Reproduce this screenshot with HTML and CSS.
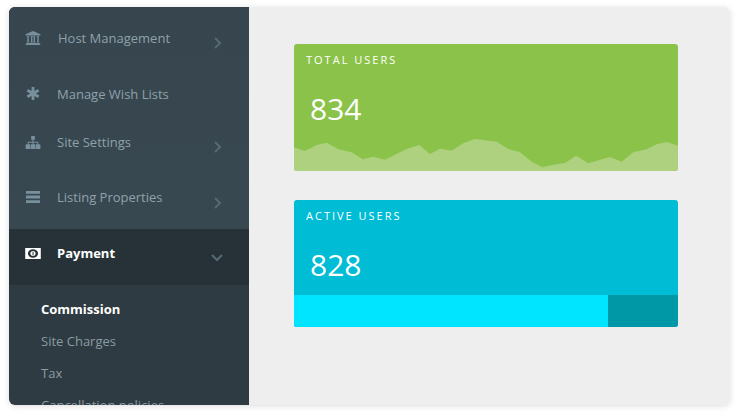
FILE: index.html
```html
<!DOCTYPE html>
<html lang="en">
<head>
<meta charset="utf-8">
<title>Dashboard</title>
<link rel="stylesheet" href="styles.css">
</head>
<body>
<div class="window">
  <nav class="sidebar">
    <ul class="menu">
      <li class="item item-host">
        <svg class="icon" viewBox="0 0 17 16"><path d="M8.500 0 17 3.600V5H0V3.600zM1.500 6h2.600v.8H3.600v5.400h.5v1H1.500v-1H2V6.800h-.5zM5.700 6h2.600v.8h-.5v5.400h.5v1H5.700v-1h.5V6.800h-.5zM8.700 6h2.600v.8h-.5v5.400h.5v1H8.700v-1h.5V6.800h-.5zM12.900 6h2.600v.8H15v5.400h.5v1h-2.600v-1h.5V6.800h-.5zM.8 13.800h15.400V15H.8zM0 15.200h17V16H0z"/></svg>
        <span class="label">Host Management</span>
        <svg class="chev" viewBox="0 0 10 14"><path d="M2 2l5 5-5 5"/></svg>
      </li>
      <li class="item item-wish">
        <svg class="icon icon-small" viewBox="0 0 14 14"><path d="M5.500 0h3v4.400l3.800-2.200 1.500 2.600L10 7l3.800 2.200-1.500 2.600L8.500 9.600V14h-3V9.600l-3.800 2.200L.2 9.200 4 7 .2 4.800l1.500-2.600 3.800 2.200z"/></svg>
        <span class="label">Manage Wish Lists</span>
      </li>
      <li class="item item-site">
        <svg class="icon icon-site" viewBox="0 0 16 14"><path d="M6 0h4v4H8.600v2.200h5.100V9H15a1 1 0 0 1 1 1v4h-5v-4a1 1 0 0 1 1-1h.7V7.200H8.600V9h1.900v5h-5V9h2V7.200H3.300V9H4a1 1 0 0 1 1 1v4H0v-4a1 1 0 0 1 1-1h1.300V6.200h5.100V4H6z"/></svg>
        <span class="label">Site Settings</span>
        <svg class="chev" viewBox="0 0 10 14"><path d="M2 2l5 5-5 5"/></svg>
      </li>
      <li class="item item-list">
        <svg class="icon icon-bars" viewBox="0 0 14 12"><path d="M0 0h14v2.800H0zM0 4.600h14v2.800H0zM0 9.200h14V12H0z"/></svg>
        <span class="label">Listing Properties</span>
        <svg class="chev" viewBox="0 0 10 14"><path d="M2 2l5 5-5 5"/></svg>
      </li>
      <li class="item item-pay">
        <svg class="icon icon-pay" viewBox="0 0 17 12"><path d="M0 0h17v12H0z"/><ellipse class="pay-hole" cx="8.500" cy="6" rx="5.500" ry="4.600"/><circle class="pay-mark" cx="8.500" cy="6" r="2.800"/><path class="pay-digit" d="M8 4.200h1.100v3.600H8z"/></svg>
        <span class="label">Payment</span>
        <svg class="chev chev-open" viewBox="0 0 14 10"><path d="M2 2l5 5 5-5"/></svg>
      </li>
    </ul>
    <ul class="submenu">
      <li class="sub sub-active">Commission</li>
      <li class="sub">Site Charges</li>
      <li class="sub">Tax</li>
      <li class="sub">Cancellation policies</li>
    </ul>
  </nav>
  <main class="content">
    <section class="card card-green">
      <h2 class="card-title">TOTAL USERS</h2>
      <p class="card-value">834</p>
      <svg class="spark" viewBox="0 0 384 45" preserveAspectRatio="none"><path d="M0 21.300 11 25 22.700 19 32.700 16.700 44.300 23.300 57.700 26.300 68.700 33.300 79.300 30.700 91 33.700 112.700 23 125.300 19 136 28 146 22.700 157.700 24.700 169.300 17.300 181 13 191 14.300 202.700 15.700 214.300 23 226 26.300 237.700 35.700 248.300 41.300 259.300 38.700 271 37 282 29.700 294.300 37.300 316 31 327.700 35.700 339.300 26.300 352.700 23.300 362.700 18.300 372.700 16 384 19.700V45H0z"/></svg>
    </section>
    <section class="card card-blue">
      <h2 class="card-title">ACTIVE USERS</h2>
      <p class="card-value">828</p>
      <div class="progress"><div class="progress-fill"></div></div>
    </section>
  </main>
</div>
</body>
</html>
```
FILE: styles.css
```css
* { box-sizing: border-box; }
html, body { height: 100%; }
body {
  margin: 0;
  padding: 7px 8px 11px 9px;
  background: #fff;
  font-family: "Open Sans", sans-serif;
  overflow: hidden;
}
.window {
  display: flex;
  height: 398px;
  border-radius: 6px;
  overflow: hidden;
  box-shadow: 0 1px 6px rgba(0, 0, 0, .14);
}
.sidebar {
  flex: 0 0 240px;
  background: #2e3b42;
  overflow: hidden;
}
.menu, .submenu { list-style: none; margin: 0; padding: 0; }
.menu { background: linear-gradient(#36454e, #394952); }
.item {
  display: flex;
  align-items: center;
  padding-left: 16px;
  color: #8fa2ab;
  font-size: 13px;
}
.label { margin-left: 16px; flex: 1; white-space: nowrap; }
.item-host { height: 62px; }
.item-host .label { margin-left: 17px; }
.item-wish { height: 49px; }
.item-site { height: 48px; }
.item-list { height: 63px; padding-bottom: 2px; }
.item-pay {
  height: 56px;
  padding-bottom: 8px;
  background: #263238;
  color: #fff;
  font-weight: 700;
}
.icon { flex: 0 0 16px; width: 16px; height: 14px; fill: #78909c; }
.icon-small { height: 13px; }
.icon-site { height: 13px; }
.icon-bars { height: 12px; }
.icon-pay { fill: #fff; height: 11px; }
.pay-hole { fill: #263238; }
.pay-mark { fill: #fff; }
.pay-digit { fill: #263238; }
.chev {
  flex: 0 0 10px;
  width: 10px;
  height: 14px;
  margin: 10px 26px 0 0;
  fill: none;
  stroke: #566a74;
  stroke-width: 2;
}
.item-list .chev { margin-top: 12px; }
.chev-open { flex-basis: 14px; width: 14px; height: 10px; margin: 10px 25px 0 0; stroke: #566a74; }
.submenu { padding-top: 8px; }
.sub {
  height: 32px;
  line-height: 32px;
  padding-left: 32px;
  color: #8a9ca5;
  font-size: 13px;
  white-space: nowrap;
}
.sub-active { color: #fff; font-weight: 700; }
.content {
  flex: 1;
  background: #eee;
  padding: 37px 0 0 45px;
}
.card {
  position: relative;
  width: 384px;
  height: 127px;
  margin-bottom: 29px;
  border-radius: 3px;
  overflow: hidden;
  color: #fff;
}
.card-green { background: #8bc34a; }
.card-blue { background: #00bcd4; display: flex; flex-direction: column; }
.card-title {
  margin: 0;
  padding: 8px 0 0 12px;
  font-size: 11px;
  line-height: 16px;
  font-weight: 400;
  letter-spacing: 2px;
}
.card-value {
  margin: 0;
  padding: 18px 0 0 16px;
  font-size: 30px;
  line-height: 46px;
}
.spark { position: absolute; left: 0; bottom: 0; width: 384px; height: 45px; fill: #aed17f; display: block; }
.progress { display: flex; height: 32px; margin-top: auto; background: #0097a7; }
.progress-fill { width: 314px; background: #00e5ff; }
```
